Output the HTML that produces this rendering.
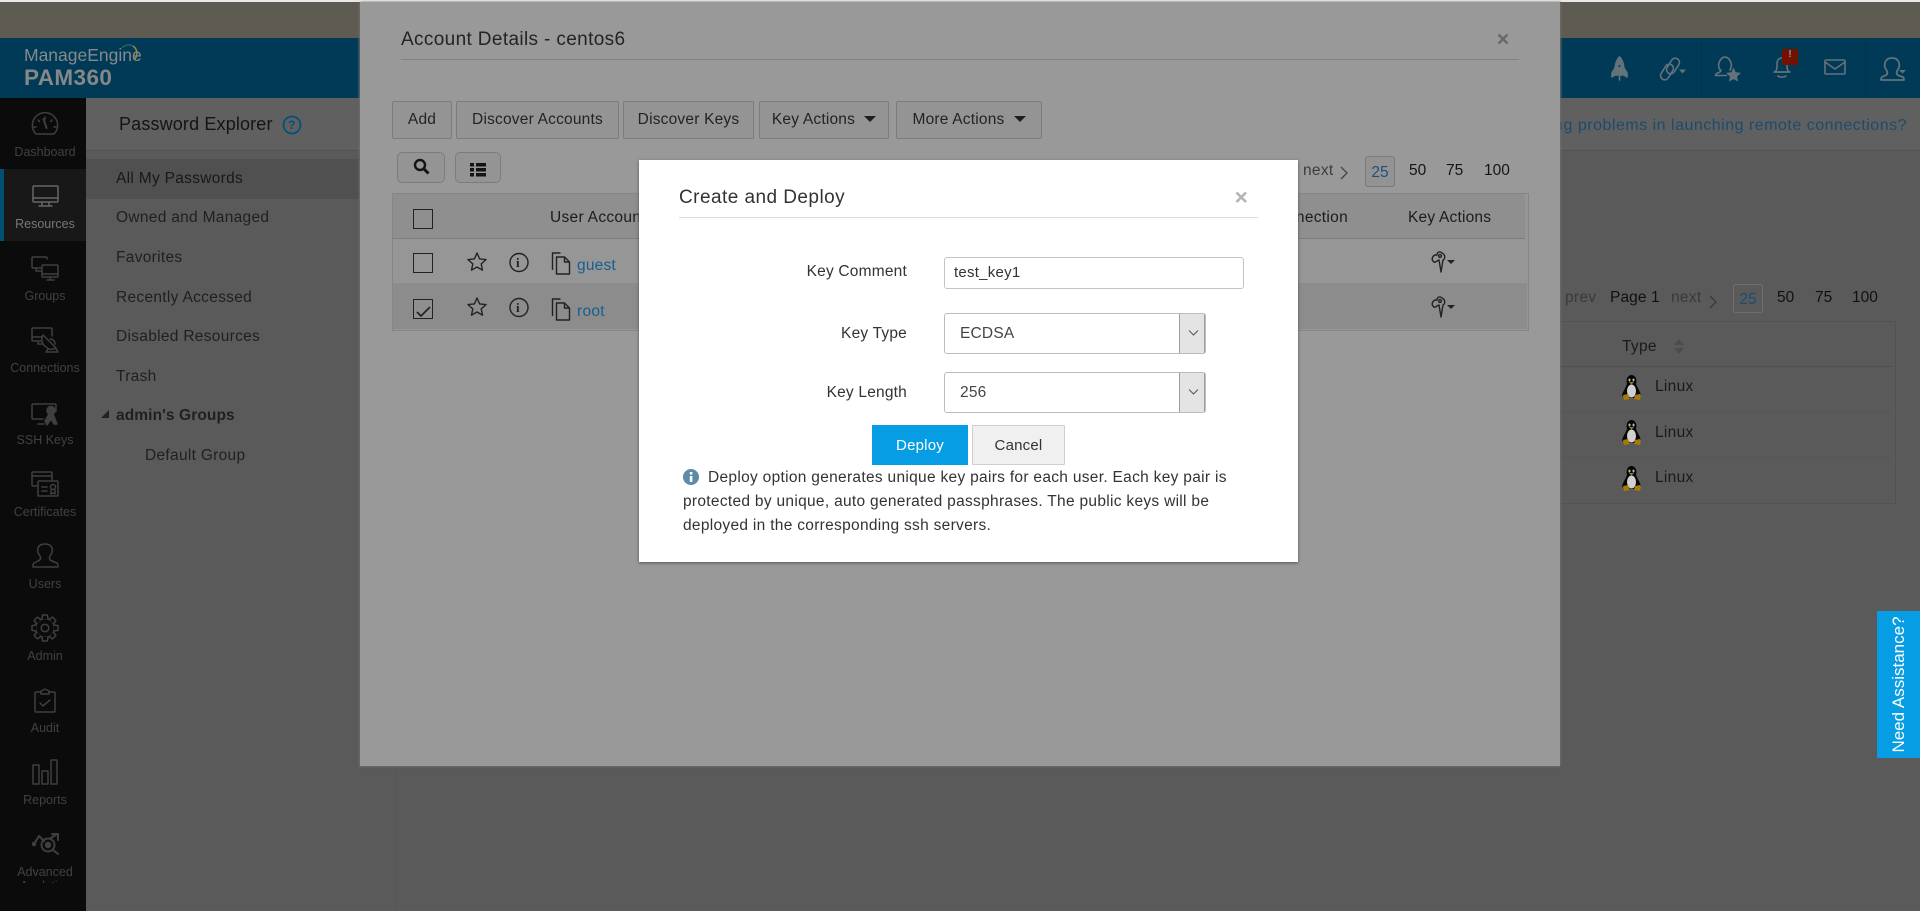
<!DOCTYPE html>
<html lang="en">
<head>
<meta charset="utf-8">
<title>PAM360 - Create and Deploy</title>
<style>
html,body{margin:0;padding:0;width:1920px;height:911px;overflow:hidden;background:#5a5a5a}
body{font-family:"Liberation Sans",sans-serif;font-size:15.5px;color:#222;position:relative}
.a{position:absolute}
.t{position:absolute;white-space:nowrap;line-height:20px;letter-spacing:.3px;margin-top:1px}
.n{position:absolute;left:0;width:90px;text-align:center;font-size:12.5px;line-height:14px;color:#414141;white-space:nowrap}
svg{position:absolute;left:0;top:0;overflow:visible}
.b{position:absolute;box-sizing:border-box;top:101px;height:38px;background:#949494;border:1px solid #7c7c7c;border-radius:2px;color:#232323;font:15.5px/36px "Liberation Sans",sans-serif;letter-spacing:.2px;text-align:center;padding:0;white-space:nowrap}
.caret{display:inline-block;width:0;height:0;border:6px solid transparent;border-top:6px solid #1e1e1e;border-bottom:0;margin-left:9px;vertical-align:2px}
.sb{position:absolute;box-sizing:border-box;top:152px;height:31px;border:1px solid #7c7c7c;border-radius:5px;background:#949494}
.cb{position:absolute;box-sizing:border-box;left:413px;width:20px;height:20px;border:1px solid #222;background:#999}
.pg{position:absolute;box-sizing:border-box;width:30px;border:1px solid #6f6f6f;border-radius:3px;text-align:center;color:#1a4c70;letter-spacing:0}
.lbl{position:absolute;right:1013px;white-space:nowrap;line-height:20px;color:#333;letter-spacing:.2px;margin-top:1px}
.sel{position:absolute;box-sizing:border-box;left:944px;width:262px;height:41px;background:#fff;border:1px solid #bcbcbc;border-radius:3px;line-height:40px;padding-left:15px;color:#444;letter-spacing:.2px}
.sel i{position:absolute;right:0;top:0;width:26px;height:39px;box-sizing:border-box;background:#e4e4e4;border-left:1px solid #9e9e9e;border-right:1px solid #9e9e9e}
.sel svg{left:7px;top:15px}
</style>
</head>
<body>
<!-- page background -->
<div class="a" style="left:0;top:0;width:1920px;height:2px;background:#e8e8e8"></div>
<div class="a" style="left:0;top:2px;width:1920px;height:36px;background:#5e5b52"></div>
<div class="a" style="left:0;top:38px;width:1920px;height:60px;background:#003a57"></div>
<div class="a" style="left:1701px;top:38px;width:1px;height:60px;background:#00354f"></div>
<div class="a" style="left:1865px;top:38px;width:1px;height:60px;background:#00354f"></div>

<div class="t" style="left:24px;top:44px;font-size:17.5px;color:#858a8d;letter-spacing:0">ManageEngine</div>
<div class="t" style="left:24px;top:67px;font-size:22.5px;font-weight:bold;color:#868888;letter-spacing:.4px">PAM360</div>
<svg width="1920" height="911" fill="none">
<path d="M122 48a9 9 0 0 1 6-3" stroke="#2f6a4c" stroke-width="1.300"/>
<path d="M128 45a9 9 0 0 1 5 1" stroke="#2a5f7a" stroke-width="1.300"/>
<path d="M133 46a9 9 0 0 1 1 14" stroke="#8f8f3c" stroke-width="1.500"/>
</svg>

<!-- left nav -->
<div class="a" style="left:0;top:98px;width:86px;height:813px;background:#0b0b0b"></div>
<div class="a" style="left:0;top:169px;width:86px;height:72px;background:#181818"></div>
<div class="a" style="left:0;top:169px;width:4px;height:72px;background:#024f74"></div>

<svg width="1920" height="911" fill="none" stroke="#3f3f3f" stroke-width="1.500" stroke-linejoin="round" stroke-linecap="round">
<!-- dashboard -->
<path d="M36 134a12.600 12.600 0 1 1 18 0z"/><path d="M45 117v2M38 120l1.500 1.500M52 120l-1.500 1.500M34 127h2M54 127h2"/><path d="M43.500 119l3 9" stroke-width="2"/>
<!-- resources -->
<g stroke="#666"><rect x="33" y="186" width="25" height="16" rx="1"/><path d="M33 198h25M42 202v3M49 202v3M39 206h13"/></g>
<!-- groups -->
<path d="M47 259v-1a1 1 0 0 0-1-1H33a1 1 0 0 0-1 1v9a1 1 0 0 0 1 1h8"/><path d="M36 268v3h5"/>
<rect x="42" y="265" width="16" height="12" rx="1"/><path d="M42 274h16M47 280h7M50 277v3"/>
<!-- connections -->
<path d="M52 336v-7a1 1 0 0 0-1-1H33a1 1 0 0 0-1 1v11a1 1 0 0 0 1 1h8M32 337h10M38 341v3h4"/>
<path d="M43 335l13 13a8 8 0 0 1-10-1 9 9 0 0 1-3-12z"/><path d="M48 349l-2 3h12l-3-5M50 339a5 5 0 0 1 5 5"/>
<!-- ssh keys -->
<path d="M56 411v-6a1 1 0 0 0-1-1H33a1 1 0 0 0-1 1v13a1 1 0 0 0 1 1h10M38 424h6"/>
<path d="M45 421l4-7a4 4 0 1 1 4 0l4 10h-3l-3-5-4 6z" fill="#3f3f3f"/>
<!-- certificates -->
<path d="M37 486h-4a1 1 0 0 1-1-1v-12a1 1 0 0 1 1-1h18a1 1 0 0 1 1 1v7M32 476h20"/>
<rect x="38" y="481" width="20" height="15" rx="1"/><path d="M42 487h5M42 491h5"/><circle cx="53" cy="487" r="2.500"/><path d="M51 490v4l2-1 2 1v-4"/>
<!-- users -->
<path d="M38 561c3-1 3-3 2-5-2-3-3-5-2-8 1-3 4-4 7-4s6 1 7 4c1 3 0 5-2 8-1 2-1 4 2 5l5 2c1 .5 1 2 1 4H33c0-2 0-3.500 1-4z"/>
<!-- admin gear -->
<circle cx="45" cy="628" r="9.500"/><circle cx="45" cy="628" r="3.800"/>
<g id="tooth"><path d="M42 619l.6-4h4.800l.6 4" fill="#0b0b0b"/></g>
<use href="#tooth" transform="rotate(45 45 628)"/><use href="#tooth" transform="rotate(90 45 628)"/><use href="#tooth" transform="rotate(135 45 628)"/><use href="#tooth" transform="rotate(180 45 628)"/><use href="#tooth" transform="rotate(225 45 628)"/><use href="#tooth" transform="rotate(270 45 628)"/><use href="#tooth" transform="rotate(315 45 628)"/>
<!-- audit -->
<path d="M41 692h-5a1 1 0 0 0-1 1v18a1 1 0 0 0 1 1h18a1 1 0 0 0 1-1v-18a1 1 0 0 0-1-1h-5M41 694v-3l4-2 4 2v3z"/><path d="M40 703l3 3 7-6"/>
<!-- reports -->
<rect x="33" y="765" width="6" height="19"/><rect x="42" y="771" width="6" height="13"/><rect x="51" y="760" width="6" height="24"/>
<!-- analytics -->
<circle cx="48" cy="845" r="6.500" stroke-width="2"/><circle cx="48" cy="845" r="2.500" fill="#3f3f3f"/><path d="M53 850l5 4M34 844l5-8 5 5M51 838l6-4M52 834h6v6" stroke-width="2"/><circle cx="34" cy="844" r="1.500" fill="#3f3f3f"/>
</svg>

<div class="n" style="top:145px">Dashboard</div>
<div class="n" style="top:217px;color:#777">Resources</div>
<div class="n" style="top:289px">Groups</div>
<div class="n" style="top:361px">Connections</div>
<div class="n" style="top:433px">SSH Keys</div>
<div class="n" style="top:505px">Certificates</div>
<div class="n" style="top:577px">Users</div>
<div class="n" style="top:649px">Admin</div>
<div class="n" style="top:721px">Audit</div>
<div class="n" style="top:793px">Reports</div>
<div class="n" style="top:865px;height:18px;overflow:hidden">Advanced<br>Analytics</div>

<!-- sidebar -->
<div class="a" style="left:86px;top:98px;width:1834px;height:52px;background:#606060;border-bottom:1px solid #535353"></div>
<div class="a" style="left:86px;top:159px;width:274px;height:40px;background:#505050"></div>
<div class="t" style="left:119px;top:113px;font-size:18px;color:#141414;letter-spacing:.15px">Password Explorer</div>
<svg width="1920" height="911" fill="none"><circle cx="292" cy="125" r="8.500" stroke="#00527c" stroke-width="1.800"/></svg>
<div class="t" style="left:288px;top:114px;font-size:12px;font-weight:bold;color:#00527c;letter-spacing:0">?</div>
<div class="t" style="left:116px;top:168px;color:#181818">All My Passwords</div>
<div class="t" style="left:116px;top:207px;color:#202020">Owned and Managed</div>
<div class="t" style="left:116px;top:247px;color:#202020">Favorites</div>
<div class="t" style="left:116px;top:287px;color:#202020">Recently Accessed</div>
<div class="t" style="left:116px;top:326px;color:#202020">Disabled Resources</div>
<div class="t" style="left:116px;top:366px;color:#202020">Trash</div>
<div class="t" style="left:116px;top:405px;font-weight:bold;color:#202020;letter-spacing:.1px">admin's Groups</div>
<div class="t" style="left:145px;top:445px;color:#202020">Default Group</div>
<svg width="1920" height="911"><path d="M101 418h8v-8z" fill="#222"/></svg>

<!-- right header link -->
<div class="t" style="right:13px;top:115px;color:#1b4c6c;font-size:16px;letter-spacing:.5px">Facing problems in launching remote connections?</div>

<!-- background pagination and table -->
<div class="a" style="left:396px;top:766px;width:1px;height:145px;background:#555"></div>
<div class="t" style="left:1565px;top:287px;color:#3a3a3a">prev</div>
<div class="t" style="left:1610px;top:287px;color:#111;letter-spacing:.1px">Page 1</div>
<div class="t" style="left:1671px;top:287px;color:#3a3a3a">next</div>
<svg width="1920" height="911" fill="none"><path d="M1710 296l6 6-6 6" stroke="#3a3a3a" stroke-width="1.300"/></svg>
<div class="pg" style="left:1733px;top:284px;height:29px;line-height:29px">25</div>
<div class="t" style="left:1777px;top:287px;color:#111;letter-spacing:0">50</div>
<div class="t" style="left:1815px;top:287px;color:#111;letter-spacing:0">75</div>
<div class="t" style="left:1852px;top:287px;color:#111;letter-spacing:0">100</div>
<div class="a" style="left:1500px;top:321px;width:395px;height:181px;border:1px solid #525252;border-left:0"></div>
<div class="a" style="left:1500px;top:366px;width:392px;height:1px;background:#4f4f4f"></div>
<div class="a" style="left:1500px;top:411px;width:392px;height:1px;background:#555"></div>
<div class="a" style="left:1500px;top:457px;width:392px;height:1px;background:#555"></div>
<div class="t" style="left:1622px;top:336px;color:#1a1a1a">Type</div>
<svg width="1920" height="911"><path d="M1674 345l5-6 5 6zM1674 348l5 6 5-6z" fill="#4c4c4c"/></svg>
<svg width="0" height="0"><defs><g id="tux">
<ellipse cx="9.500" cy="6" rx="5" ry="6" fill="#050505"/>
<path d="M5 9C3 14 0 18 0 21l3 1 3 1h7l3-1 3-1c0-3-3-7-5-12z" fill="#050505"/>
<ellipse cx="9.500" cy="16" rx="4.500" ry="6.500" fill="#d0d0d0"/>
<ellipse cx="7.500" cy="5" rx="1" ry="1.500" fill="#bbb"/><ellipse cx="11.500" cy="5" rx="1" ry="1.500" fill="#bbb"/>
<path d="M7 7h5l-2.500 2.500z" fill="#a57a10"/>
<path d="M1 20l5-1 2 5-6 1-1-5zM18 19l-5 1-1 4 6 1 1-5z" fill="#a57a0a"/>
</g></defs></svg>
<svg width="1920" height="911"><use href="#tux" x="1622" y="375"/><use href="#tux" x="1622" y="420"/><use href="#tux" x="1622" y="466"/></svg>
<div class="t" style="left:1655px;top:376px;color:#1a1a1a">Linux</div>
<div class="t" style="left:1655px;top:422px;color:#1a1a1a">Linux</div>
<div class="t" style="left:1655px;top:467px;color:#1a1a1a">Linux</div>

<!-- header icons -->
<svg width="1920" height="911" fill="none" stroke="#64727a" stroke-width="1.600" stroke-linejoin="round" stroke-linecap="round">
<path d="M1619.500 57c-4 4-5 10-4 18h8c1-8 0-14-4-18z" fill="#64727a"/><circle cx="1619.500" cy="66" r="1.800" fill="#003a57"/><path d="M1615 68l-3 5v4l3-2M1624 68l3 5v4l-3-2M1619.500 76v4" fill="#64727a"/>
<rect x="-4.200" y="-8.500" width="8.400" height="17" rx="4.200" transform="translate(1673 66) rotate(32)"/>
<rect x="-4.200" y="-8.500" width="8.400" height="17" rx="4.200" transform="translate(1667 72) rotate(32)"/>
<path d="M1679 69.500h7l-3.500 4z" fill="#64727a" stroke="none"/>
<path d="M1720 70c-1-2-2-4-1-7 1-4 4-6 6-6s5 2 6 6c1 3 0 5-1 7M1721 70c0 1.500-1 2-2 2.500l-2 .8c-1 .5-1.500 1-1.500 2.200h11"/>
<path d="M1733.500 67.500l2.200 4.700 5.300.7-3.900 3.600 1 5.100-4.600-2.500-4.600 2.500 1-5.100-3.900-3.600 5.300-.7z" fill="#64727a" stroke="none"/>
<path d="M1775 72c2-2 2-4 2-8 0-4 2-6 5-6s5 2 5 6c0 4 0 6 2 8zM1778 76c2 1.500 6 1.500 8 0"/>
<path d="M1774 72h16"/>
<rect x="1825" y="60" width="20" height="14" rx="1"/><path d="M1825 62l10 7 10-7"/>
<path d="M1884 76c3-1 4-2 3-5-2-3-3-5-2-8 1-4 4-5 7-5s6 1 7 5c1 3 0 5-2 8-1 3 0 4 3 5l3 1c1 1 1 2 1 3h-23c0-1 0-2 1-3z" stroke-width="1.800"/>
<path d="M1899 70h7l-3.500 3.500z" fill="#64727a" stroke="none"/>
</svg>
<div class="a" style="left:1782px;top:49px;width:16px;height:16px;background:#731000;border-radius:1px;color:#9a9a9a;font:bold 10px/12px 'Liberation Sans',sans-serif;text-align:center">!</div>

<!-- need assistance -->
<div class="a" style="left:1877px;top:611px;width:43px;height:147px;background:#069de5"></div>
<div class="a" style="left:1825px;top:674px;width:147px;height:21px;line-height:21px;font-size:17px;color:#fff;text-align:center;transform:rotate(-90deg);white-space:nowrap">Need Assistance?</div>

<!-- account details modal -->
<div class="a" style="left:360px;top:2px;width:1200px;height:764px;background:#999;box-shadow:-1px 1px 2px #6d6d6d,1px 0 2px #6d6d6d"></div>
<div class="t" style="left:401px;top:29px;font-size:19px;color:#242424;letter-spacing:.36px">Account Details - centos6</div>
<div class="a" style="left:401px;top:59px;width:1118px;height:1px;background:#838383"></div>
<svg width="1920" height="911"><path d="M1498.500 34.500l9 9m0-9l-9 9" stroke="#6a6a6a" stroke-width="2.600"/></svg>

<button class="b" style="left:392px;width:60px">Add</button>
<button class="b" style="left:456px;width:163px">Discover Accounts</button>
<button class="b" style="left:623px;width:131px">Discover Keys</button>
<button class="b" style="left:759px;width:130px">Key Actions<span class="caret"></span></button>
<button class="b" style="left:896px;width:146px">More Actions<span class="caret"></span></button>
<div class="sb" style="left:397px;width:48px"></div>
<div class="sb" style="left:455px;width:46px"></div>
<svg width="1920" height="911" fill="none">
<circle cx="420" cy="165" r="5" stroke="#141414" stroke-width="2.400"/><path d="M424 169l4.500 4.500" stroke="#141414" stroke-width="3"/>
<path d="M470 163h4v3.500h-4zM476 163h10v3.500h-10zM470 168h4v3.500h-4zM476 168h10v3.500h-10zM470 173h4v3.500h-4zM476 173h10v3.500h-10z" fill="#141414"/>
</svg>

<div class="t" style="left:1303px;top:160px;color:#3e3e3e">next</div>
<svg width="1920" height="911" fill="none"><path d="M1341 167l6 6-6 6" stroke="#444" stroke-width="1.300"/></svg>
<div class="pg" style="left:1365px;top:156px;height:31px;line-height:31px;border-color:#7a7a7a;color:#1f4f78;background:#939393">25</div>
<div class="t" style="left:1409px;top:160px;color:#151515;letter-spacing:0">50</div>
<div class="t" style="left:1446px;top:160px;color:#151515;letter-spacing:0">75</div>
<div class="t" style="left:1484px;top:160px;color:#151515;letter-spacing:0">100</div>

<!-- account table -->
<div class="a" style="left:392px;top:193px;width:1135px;height:136px;border:1px solid #868686;background:#969696"></div>
<div class="a" style="left:393px;top:194px;width:1132px;height:44px;background:#8f8f8f;border-bottom:1px solid #7d7d7d"></div>
<div class="a" style="left:393px;top:283px;width:1134px;height:46px;background:#8c8c8c"></div>
<div class="cb" style="top:209px;background:#8f8f8f"></div>
<div class="cb" style="top:253px;background:#969696"></div>
<div class="cb" style="top:299px;background:#8f8f8f"></div>
<div class="t" style="left:550px;top:207px;color:#1c1c1c">User Account</div>
<div class="t" style="left:1408px;top:207px;color:#1c1c1c;letter-spacing:.2px">Key Actions</div>
<div class="t" style="right:572px;top:207px;color:#1c1c1c">Connection</div>
<svg width="1920" height="911" fill="none" stroke="#222" stroke-width="1.400" stroke-linejoin="round">
<path d="M417 312l4 4 9-9" stroke-width="1.700"/>
<path d="M477 253l2.600 5.900 6.400.700-4.800 4.300 1.300 6.300-5.500-3.200-5.500 3.200 1.300-6.300-4.800-4.300 6.400-.7z"/>
<path d="M477 298l2.600 5.900 6.400.700-4.800 4.300 1.300 6.300-5.500-3.200-5.500 3.200 1.300-6.300-4.800-4.300 6.400-.7z"/>
<circle cx="519" cy="262.500" r="9"/><circle cx="519" cy="307.500" r="9"/>
<path d="M552.500 270v-17h8M556.500 271v-14h8l5 5v12h-13zM564.500 257v5h5"/>
<path d="M552.500 316v-17h8M556.500 317v-14h8l5 5v12h-13zM564.500 303v5h5"/>
<path d="M1442 253c-2-2-5-1-5 2l-1 0c-3 0-5 4-3 6 1 2 3 1 4 0l2-1 2 12 2-12c2-1 3-5-1-7z"/><circle cx="1440" cy="256" r="1.400"/>
<path d="M1442 298c-2-2-5-1-5 2l-1 0c-3 0-5 4-3 6 1 2 3 1 4 0l2-1 2 12 2-12c2-1 3-5-1-7z"/><circle cx="1440" cy="301" r="1.400"/>
<path d="M1447 260h8l-4 4zM1447 305h8l-4 4z" fill="#222" stroke="none"/>
</svg>
<div class="t" style="left:516px;top:252px;font:bold 13px/20px 'Liberation Serif',serif;color:#222;letter-spacing:0">i</div>
<div class="t" style="left:516px;top:297px;font:bold 13px/20px 'Liberation Serif',serif;color:#222;letter-spacing:0">i</div>
<div class="t" style="left:577px;top:255px;color:#16608f;letter-spacing:.2px">guest</div>
<div class="t" style="left:577px;top:301px;color:#16608f;letter-spacing:.3px">root</div>

<!-- create and deploy dialog -->
<div class="a" style="left:639px;top:160px;width:659px;height:402px;background:#fff;box-shadow:0 1px 3px #555"></div>
<div class="t" style="left:679px;top:187px;font-size:19px;color:#333;letter-spacing:.45px">Create and Deploy</div>
<div class="a" style="left:679px;top:217px;width:579px;height:1px;background:#dcdcdc"></div>
<svg width="1920" height="911"><path d="M1236.500 192.500l9.500 9.500m0-9.500l-9.500 9.500" stroke="#b4b4b4" stroke-width="2.600"/></svg>

<div class="lbl" style="top:261px">Key Comment</div>
<div class="a" style="left:944px;top:257px;width:300px;height:32px;box-sizing:border-box;border:1px solid #c4c4c4;border-radius:3px;line-height:30px;padding-left:9px;color:#333;letter-spacing:.25px;font-size:15px">test_key1</div>

<div class="lbl" style="top:323px">Key Type</div>
<div class="sel" style="top:313px;height:41px">ECDSA<i><svg width="12" height="9" fill="none"><path d="M2 1.500l4.500 4.500 4.500-4.500" stroke="#555" stroke-width="1"/></svg></i></div>

<div class="lbl" style="top:382px">Key Length</div>
<div class="sel" style="top:372px;height:41px">256<i><svg width="12" height="9" fill="none"><path d="M2 1.500l4.500 4.500 4.500-4.500" stroke="#555" stroke-width="1"/></svg></i></div>

<button class="a" style="left:872px;top:425px;width:96px;height:40px;background:#069de5;border:0;color:#fff;font:15px 'Liberation Sans',sans-serif;padding:0;letter-spacing:.2px">Deploy</button>
<button class="a" style="left:972px;top:425px;width:93px;height:40px;box-sizing:border-box;background:#f0f0f0;border:1px solid #cfcfcf;border-radius:1px;color:#333;font:15px 'Liberation Sans',sans-serif;padding:0;letter-spacing:.2px">Cancel</button>

<svg width="1920" height="911"><circle cx="691" cy="477" r="8" fill="#5d8aa8"/><rect x="689.800" y="476" width="2.600" height="6" fill="#fff"/><rect x="689.800" y="472" width="2.600" height="2.600" fill="#fff"/></svg>
<div class="t" style="left:708px;top:467px;color:#333">Deploy option generates unique key pairs for each user. Each key pair is</div>
<div class="t" style="left:683px;top:491px;color:#333">protected by unique, auto generated passphrases. The public keys will be</div>
<div class="t" style="left:683px;top:515px;color:#333">deployed in the corresponding ssh servers.</div>
</body>
</html>
